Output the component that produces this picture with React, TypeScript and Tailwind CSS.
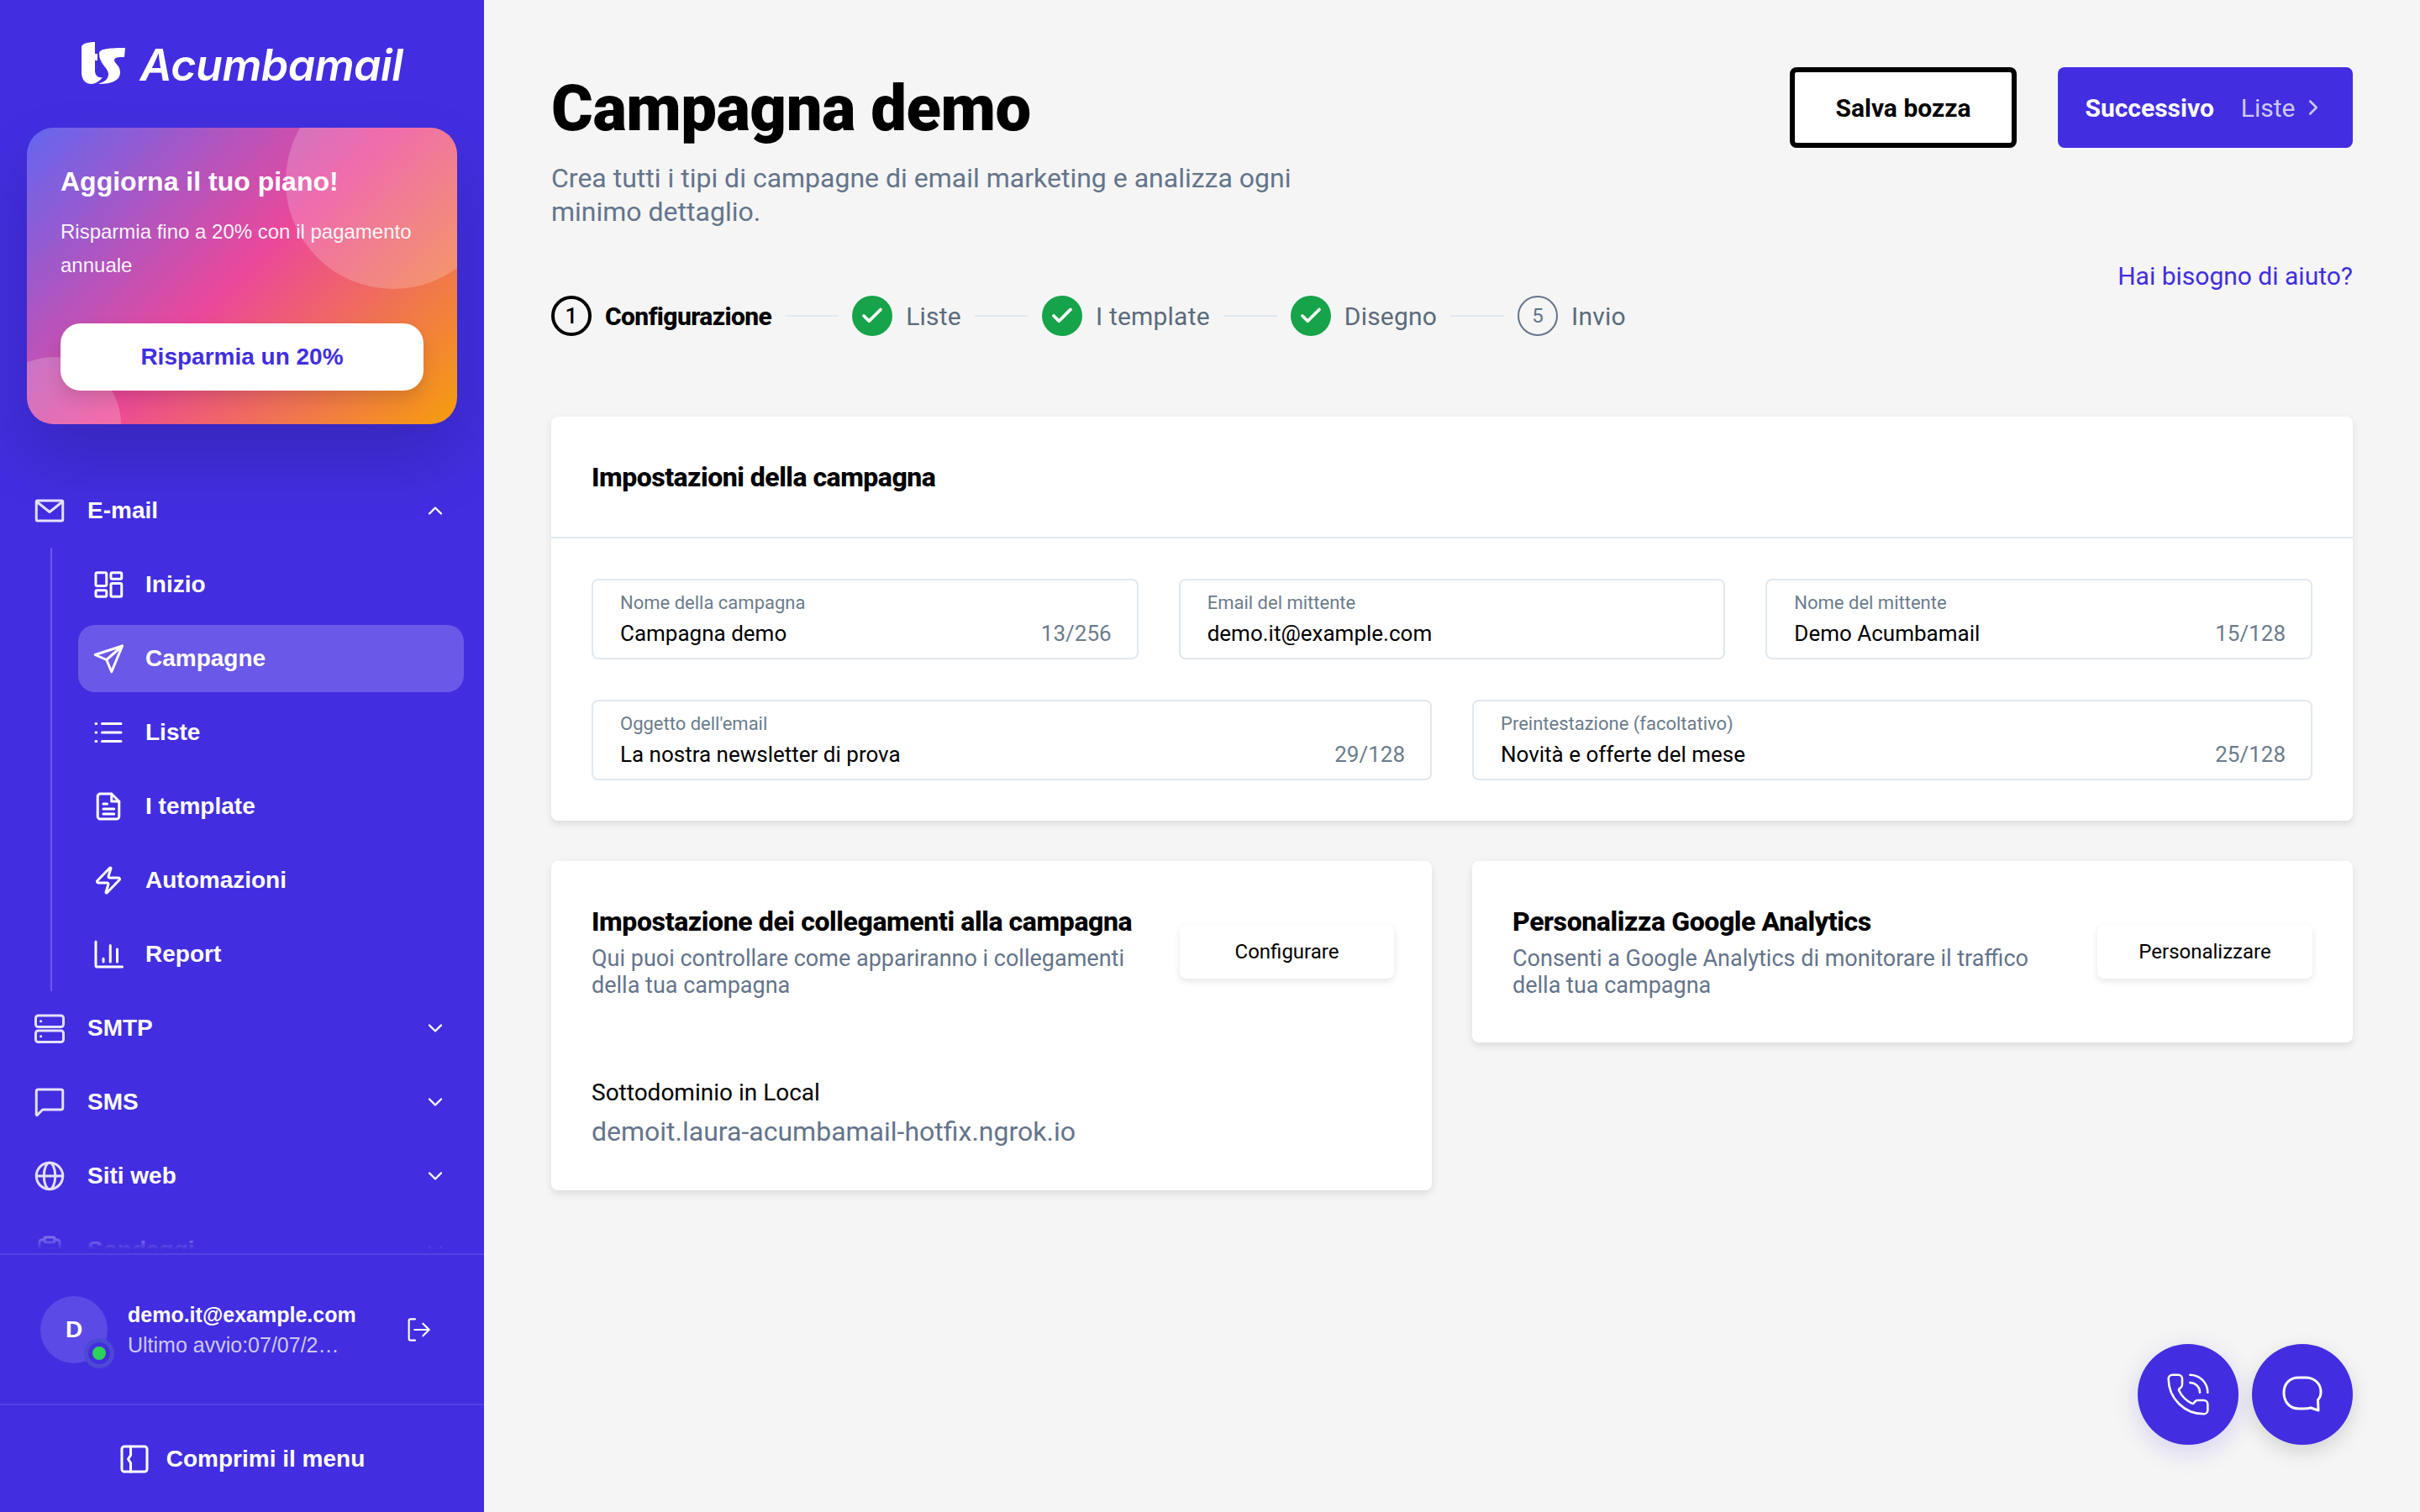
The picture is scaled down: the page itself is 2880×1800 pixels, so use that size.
import React from "react";
import { ChevronDown, ChevronUp, ChevronRight, Check, PhoneCall, ClipboardList, Zap } from "lucide-react";

type IconProps = { className?: string; strokeWidth?: number };
const Svg = ({ className, strokeWidth = 2, children }: IconProps & { children: React.ReactNode }) => (
  <svg viewBox="0 0 24 24" fill="none" stroke="currentColor" strokeWidth={strokeWidth} strokeLinecap="round" strokeLinejoin="round" className={className}>
    {children}
  </svg>
);
const MailI = (p: IconProps) => (
  <Svg {...p}><rect x="1.5" y="4" width="21" height="16" rx="1" /><path d="M2 5l10 8 10-8" /></Svg>
);
const GridI = (p: IconProps) => (
  <Svg {...p}>
    <rect x="2" y="2.5" width="8.5" height="10.5" rx="1" /><rect x="14" y="2.5" width="8.5" height="5" rx="1" />
    <rect x="2" y="16.5" width="8.5" height="5" rx="1" /><rect x="14" y="11" width="8.5" height="10.5" rx="1" />
  </Svg>
);
const SendI = (p: IconProps) => (
  <Svg {...p}><path d="M23 2L1.5 9l9 4 4 9.5z" /><path d="M23 2L10.5 13" /></Svg>
);
const ListI = (p: IconProps) => (
  <Svg {...p}><path d="M7 5h15M7 12h15M7 19h15" /><path d="M2 5h.5M2 12h.5M2 19h.5" /></Svg>
);
const DocI = (p: IconProps) => (
  <Svg {...p}>
    <path d="M14.5 2H5.5a2 2 0 0 0-2 2v16a2 2 0 0 0 2 2h13a2 2 0 0 0 2-2V8z" />
    <path d="M14.5 2v6h6" /><path d="M8 10h3M8 14h8.5M8 18h8.5" />
  </Svg>
);
const ChartI = (p: IconProps) => (
  <Svg {...p}><path d="M2 2v19a1 1 0 0 0 1 1h20" /><path d="M8 15.5V18M13.5 5v13M19 8v10" /></Svg>
);
const ServerI = (p: IconProps) => (
  <Svg {...p}>
    <rect x="1" y="2" width="22" height="9" rx="2" /><rect x="1" y="14" width="22" height="9" rx="2" />
    <path d="M5 6.5h.2M5 18.5h.2" />
  </Svg>
);
const ChatI = (p: IconProps) => (
  <Svg {...p}><path d="M1.5 3.5a1.5 1.5 0 0 1 1.5-1.5h18a1.5 1.5 0 0 1 1.500 1.500v13a1.500 1.500 0 0 1-1.500 1.500H6.500L2 22.500l-.5-.5z" /></Svg>
);
const GlobeI = (p: IconProps) => (
  <Svg {...p}><circle cx="12" cy="12" r="10.500" /><ellipse cx="12" cy="12" rx="4.500" ry="10.500" /><path d="M1.500 12h21" /></Svg>
);
const LogoutI = (p: IconProps) => (
  <Svg {...p}><path d="M9 2.500H5a1.500 1.500 0 0 0-1.500 1.500v16A1.500 1.500 0 0 0 5 21.500h4" /><path d="M8.500 12h13M16 6.500l5.500 5.500-5.500 5.500" /></Svg>
);
const PanelI = (p: IconProps) => (
  <Svg {...p}><rect x="2" y="2" width="20" height="20" rx="2" /><path d="M9 2v7l-2 3 2 3v7" /></Svg>
);

const Logo = () => (
  <div className="flex items-end justify-center gap-[18px] h-[152px] pb-[52px]">
    <svg viewBox="0 0 52 50" className="w-[52px] h-[50px]" fill="#ffffff">
      <path d="M0 6C0 2 8 0 16 0V14H19V22H16V34C16 40 20 43 25 42C22 46 17 50 12 50C4 50 0 44 0 36Z" />
      <path d="M21 14C21 9 27 7 52 7L51 18C44 18 39 18 39 22C39 25 46 28 46 36C46 46 36 50 20 50C28 47 32 44 32 38C32 31 21 26 21 14Z" />
    </svg>
    <span className="font-[family-name:Inter,sans-serif] italic font-semibold text-[52px] leading-[44px] text-white tracking-[-0.5px]">Acumbamail</span>
  </div>
);

const Promo = () => (
  <div className="relative mx-[32px] w-[512px] h-[353px] rounded-[32px] overflow-hidden bg-[linear-gradient(135deg,#6366f1_0%,#ec4899_50%,#f59e0b_100%)] shadow-[0_40px_80px_rgba(0,0,0,0.16)]">
    <div className="absolute left-[308px] top-[-64px] w-[256px] h-[256px] rounded-full bg-white/20" />
    <div className="absolute left-[-48px] top-[273px] w-[160px] h-[160px] rounded-full bg-white/20" />
    <div className="relative px-[40px] pt-[42px]">
      <div className="text-[32px] leading-[44px] font-bold text-white">Aggiorna il tuo piano!</div>
      <div className="mt-[18px] text-[24px] leading-[40px] text-white/95">Risparmia fino a 20% con il pagamento annuale</div>
      <div className="mt-[49px] h-[80px] rounded-[24px] bg-white flex items-center justify-center text-[28px] font-bold text-[#412ee0] shadow-[0_10px_20px_rgba(0,0,0,0.12)]">Risparmia un 20%</div>
    </div>
  </div>
);

const TopRow = ({ icon, label, open }: { icon: React.ReactNode; label: string; open?: boolean }) => (
  <div className="h-[88px] flex items-center pl-[41px] pr-[44px] text-white">
    <span className="w-[63px] flex items-center">{icon}</span>
    <span className="flex-1 text-[28px] font-bold">{label}</span>
    {open ? <ChevronUp className="w-[28px] h-[28px]" strokeWidth={2} /> : <ChevronDown className="w-[28px] h-[28px]" strokeWidth={2} />}
  </div>
);

const SubRow = ({ icon, label, active }: { icon: React.ReactNode; label: string; active?: boolean }) => (
  <div className="h-[88px] py-[4px]">
    <div className={`h-[80px] flex items-center pl-[18px] rounded-[20px] text-white ${active ? "bg-[#6a58e8]" : ""}`}>
      <span className="w-[62px] flex items-center">{icon}</span>
      <span className="text-[28px] font-bold">{label}</span>
    </div>
  </div>
);

const ic = "w-[36px] h-[36px]";
const top = "w-[36px] h-[36px] text-[#e4e0fb]";

const Sidebar = () => (
  <aside className="w-[576px] h-[1800px] shrink-0 bg-[#422ee0] flex flex-col font-[family-name:'Liberation_Sans',Arial,sans-serif]">
    <Logo />
    <Promo />
    <nav className="relative mt-[59px] flex-1 overflow-hidden">
      <TopRow icon={<MailI className={top} />} label="E-mail" open />
      <div className="ml-[60px] border-l-[2px] border-[#6a58e8] pl-[31px] pr-[24px]">
        <SubRow icon={<GridI className={ic} />} label="Inizio" />
        <SubRow icon={<SendI className={ic} />} label="Campagne" active />
        <SubRow icon={<ListI className={ic} />} label="Liste" />
        <SubRow icon={<DocI className={ic} />} label="I template" />
        <SubRow icon={<Zap className={ic} strokeWidth={2} />} label="Automazioni" />
        <SubRow icon={<ChartI className={ic} />} label="Report" />
      </div>
      <TopRow icon={<ServerI className={top} />} label="SMTP" />
      <TopRow icon={<ChatI className={top} />} label="SMS" />
      <TopRow icon={<GlobeI className={top} />} label="Siti web" />
      <TopRow icon={<ClipboardList className={top} strokeWidth={2} />} label="Sondaggi" />
      <div className="absolute left-0 right-0 bottom-0 h-[44px] bg-[linear-gradient(to_bottom,rgba(66,46,224,0),#422ee0_90%)]" />
    </nav>
    <div className="h-[179px] border-t-[2px] border-[#5443e3] flex items-center pl-[48px] pr-[62px] text-white">
      <div className="relative w-[80px] h-[80px] shrink-0 rounded-full bg-[#5b4ae6] flex items-center justify-center text-[28px] font-bold">
        D
        <span className="absolute left-[52px] top-[50px] w-[36px] h-[36px] rounded-full border-[5px] border-[#4e48d4] bg-[#422ee0] flex items-center justify-center">
          <span className="w-[16px] h-[16px] rounded-full bg-[#2ed15a]" />
        </span>
      </div>
      <div className="ml-[24px] w-[264px] min-w-0">
        <div className="text-[25px] leading-[36px] font-bold whitespace-nowrap">demo.it@example.com</div>
        <div className="text-[25px] leading-[36px] text-[#cdc8f6] truncate">Ultimo avvio:07/07/26 10:24</div>
      </div>
      <LogoutI className="ml-auto w-[32px] h-[32px]" strokeWidth={1.6} />
    </div>
    <div className="h-[129px] border-t-[2px] border-[#5443e3] flex items-center justify-center gap-[20px] text-white">
      <PanelI className="w-[36px] h-[36px]" />
      <span className="text-[28px] font-bold">Comprimi il menu</span>
    </div>
  </aside>
);

const Step = ({ n, label, state }: { n: number; label: string; state: "current" | "done" | "todo" }) => (
  <div className="flex items-center gap-[16px]">
    {state === "current" && <span className="w-[48px] h-[48px] rounded-full border-[4px] border-black flex items-center justify-center text-[26px] font-medium text-black">{n}</span>}
    {state === "done" && <span className="w-[48px] h-[48px] rounded-full bg-[#16a34a] flex items-center justify-center text-white"><Check className="w-[30px] h-[30px]" strokeWidth={3} /></span>}
    {state === "todo" && <span className="w-[48px] h-[48px] rounded-full border-[2px] border-[#64748b] flex items-center justify-center text-[24px] text-[#64748b]">{n}</span>}
    <span className={state === "current" ? "text-[30px] font-extrabold text-black tracking-[-0.6px]" : "text-[30px] text-[#5b6b7b] tracking-[0.2px]"}>{label}</span>
  </div>
);
const StepLine = () => <div className="w-[64px] h-[2px] mx-[16px] bg-[#e2e8f0]" />;

const Field = ({ label, value, count }: { label: string; value: string; count?: string }) => (
  <div className="h-[96px] border-[2px] border-[#e2e8f0] rounded-[8px] bg-white pl-[32px] pr-[30px] flex flex-col justify-center">
    <div className="text-[22px] leading-[30px] text-[#6b7c8c]">{label}</div>
    <div className="flex items-center justify-between mt-[4px]">
      <span className="text-[26px] leading-[34px] text-black">{value}</span>
      {count && <span className="text-[26px] leading-[34px] text-[#6b7c8c]">{count}</span>}
    </div>
  </div>
);

const cardCls = "bg-white rounded-[8px] shadow-[0_4px_10px_rgba(0,0,0,0.1)]";
const GhostBtn = ({ label, w }: { label: string; w: string }) => (
  <div className={`h-[64px] ${w} shrink-0 rounded-[8px] bg-white shadow-[0_3px_8px_rgba(0,0,0,0.1)] flex items-center justify-center text-[24px] text-black`}>{label}</div>
);

const Main = () => (
  <main className="relative flex-1 h-[1800px] bg-[#f5f5f5] pl-[80px] pr-[80px] font-[family-name:Roboto,sans-serif]">
    <div className="flex justify-between pt-[80px]">
      <div className="w-[980px]">
        <h1 className="text-[76px] leading-[100px] font-black text-black tracking-[-0.5px] -mt-[1px]">Campagna demo</h1>
        <p className="mt-[13px] text-[32px] leading-[40px] text-[#64748b]">Crea tutti i tipi di campagne di email marketing e analizza ogni minimo dettaglio.</p>
      </div>
      <div className="flex gap-[49px]">
        <div className="w-[270px] h-[96px] border-[6px] border-black rounded-[8px] bg-white flex items-center justify-center text-[30px] font-bold text-black">Salva bozza</div>
        <div className="w-[351px] h-[96px] rounded-[8px] bg-[#422ee0] flex items-center justify-center text-[30px]">
          <span className="font-bold text-white">Successivo</span>
          <span className="ml-[32px] text-[#cdc8f6]">Liste</span>
          <ChevronRight className="ml-[6px] w-[30px] h-[30px] text-[#cdc8f6]" />
        </div>
      </div>
    </div>
    <div className="relative mt-[80px] flex items-center h-[48px]">
      <Step n={1} label="Configurazione" state="current" />
      <StepLine />
      <Step n={2} label="Liste" state="done" />
      <StepLine />
      <Step n={3} label="I template" state="done" />
      <StepLine />
      <Step n={4} label="Disegno" state="done" />
      <StepLine />
      <Step n={5} label="Invio" state="todo" />
      <span className="absolute right-0 top-[-43px] text-[30px] leading-[40px] text-[#422ee0]">Hai bisogno di aiuto?</span>
    </div>

    <section className={`mt-[96px] ${cardCls}`}>
      <div className="h-[145px] border-b-[2px] border-[#e2e8f0] flex items-center px-[48px]">
        <h2 className="text-[32px] font-extrabold text-black tracking-[-0.5px]">Impostazioni della campagna</h2>
      </div>
      <div className="p-[48px] flex flex-col gap-[48px]">
        <div className="grid grid-cols-3 gap-[48px]">
          <Field label="Nome della campagna" value="Campagna demo" count="13/256" />
          <Field label="Email del mittente" value="demo.it@example.com" />
          <Field label="Nome del mittente" value="Demo Acumbamail" count="15/128" />
        </div>
        <div className="grid grid-cols-2 gap-[48px]">
          <Field label="Oggetto dell'email" value="La nostra newsletter di prova" count="29/128" />
          <Field label="Preintestazione (facoltativo)" value="Novità e offerte del mese" count="25/128" />
        </div>
      </div>
    </section>

    <div className="mt-[48px] grid grid-cols-2 gap-[48px] items-start">
      <section className={`${cardCls} h-[392px] px-[48px] pt-[52px]`}>
        <div className="flex justify-between">
          <div className="w-[640px]">
            <h3 className="text-[32px] leading-[40px] font-extrabold text-black tracking-[-0.4px] whitespace-nowrap">Impostazione dei collegamenti alla campagna</h3>
            <p className="mt-[8px] text-[27px] leading-[32px] text-[#64748b]">Qui puoi controllare come appariranno i collegamenti della tua campagna</p>
          </div>
          <div className="mt-[24px] mr-[-3px]"><GhostBtn label="Configurare" w="w-[255px]" /></div>
        </div>
        <div className="mt-[92px] text-[28px] leading-[40px] text-black">Sottodominio in Local</div>
        <div className="mt-[4px] text-[32px] leading-[44px] text-[#64748b]">demoit.laura-acumbamail-hotfix.ngrok.io</div>
      </section>
      <section className={`${cardCls} h-[216px] px-[48px] pt-[52px] flex justify-between`}>
        <div className="w-[640px]">
          <h3 className="text-[32px] leading-[40px] font-extrabold text-black tracking-[-0.4px]">Personalizza Google Analytics</h3>
          <p className="mt-[8px] text-[27px] leading-[32px] text-[#64748b]">Consenti a Google Analytics di monitorare il traffico della tua campagna</p>
        </div>
        <div className="mt-[24px]"><GhostBtn label="Personalizzare" w="w-[256px]" /></div>
      </section>
    </div>

    <div className="absolute right-[80px] bottom-[80px] flex gap-[16px]">
      <div className="w-[120px] h-[120px] rounded-full bg-[#422ee0] flex items-center justify-center text-white shadow-[0_8px_30px_rgba(66,46,224,0.18)]">
        <PhoneCall className="w-[56px] h-[56px]" strokeWidth={1.1} />
      </div>
      <div className="w-[120px] h-[120px] rounded-full bg-[#422ee0] flex items-center justify-center text-white shadow-[0_8px_24px_rgba(0,0,0,0.14)]">
        <svg viewBox="0 0 48 44" className="w-[48px] h-[44px]" fill="none" stroke="currentColor" strokeWidth="3" strokeLinejoin="round">
          <path d="M20 2h8c9 0 18 6 18 17 0 4-1 7-3.500 9.500L43 41l-9-3c-3 1-5 1-8 1H20C9 39 2 31 2 20S9 2 20 2Z" />
        </svg>
      </div>
    </div>
  </main>
);

export default function App() {
  return (
    <div className="flex w-[2880px] h-[1800px] overflow-hidden">
      <Sidebar />
      <Main />
    </div>
  );
}
